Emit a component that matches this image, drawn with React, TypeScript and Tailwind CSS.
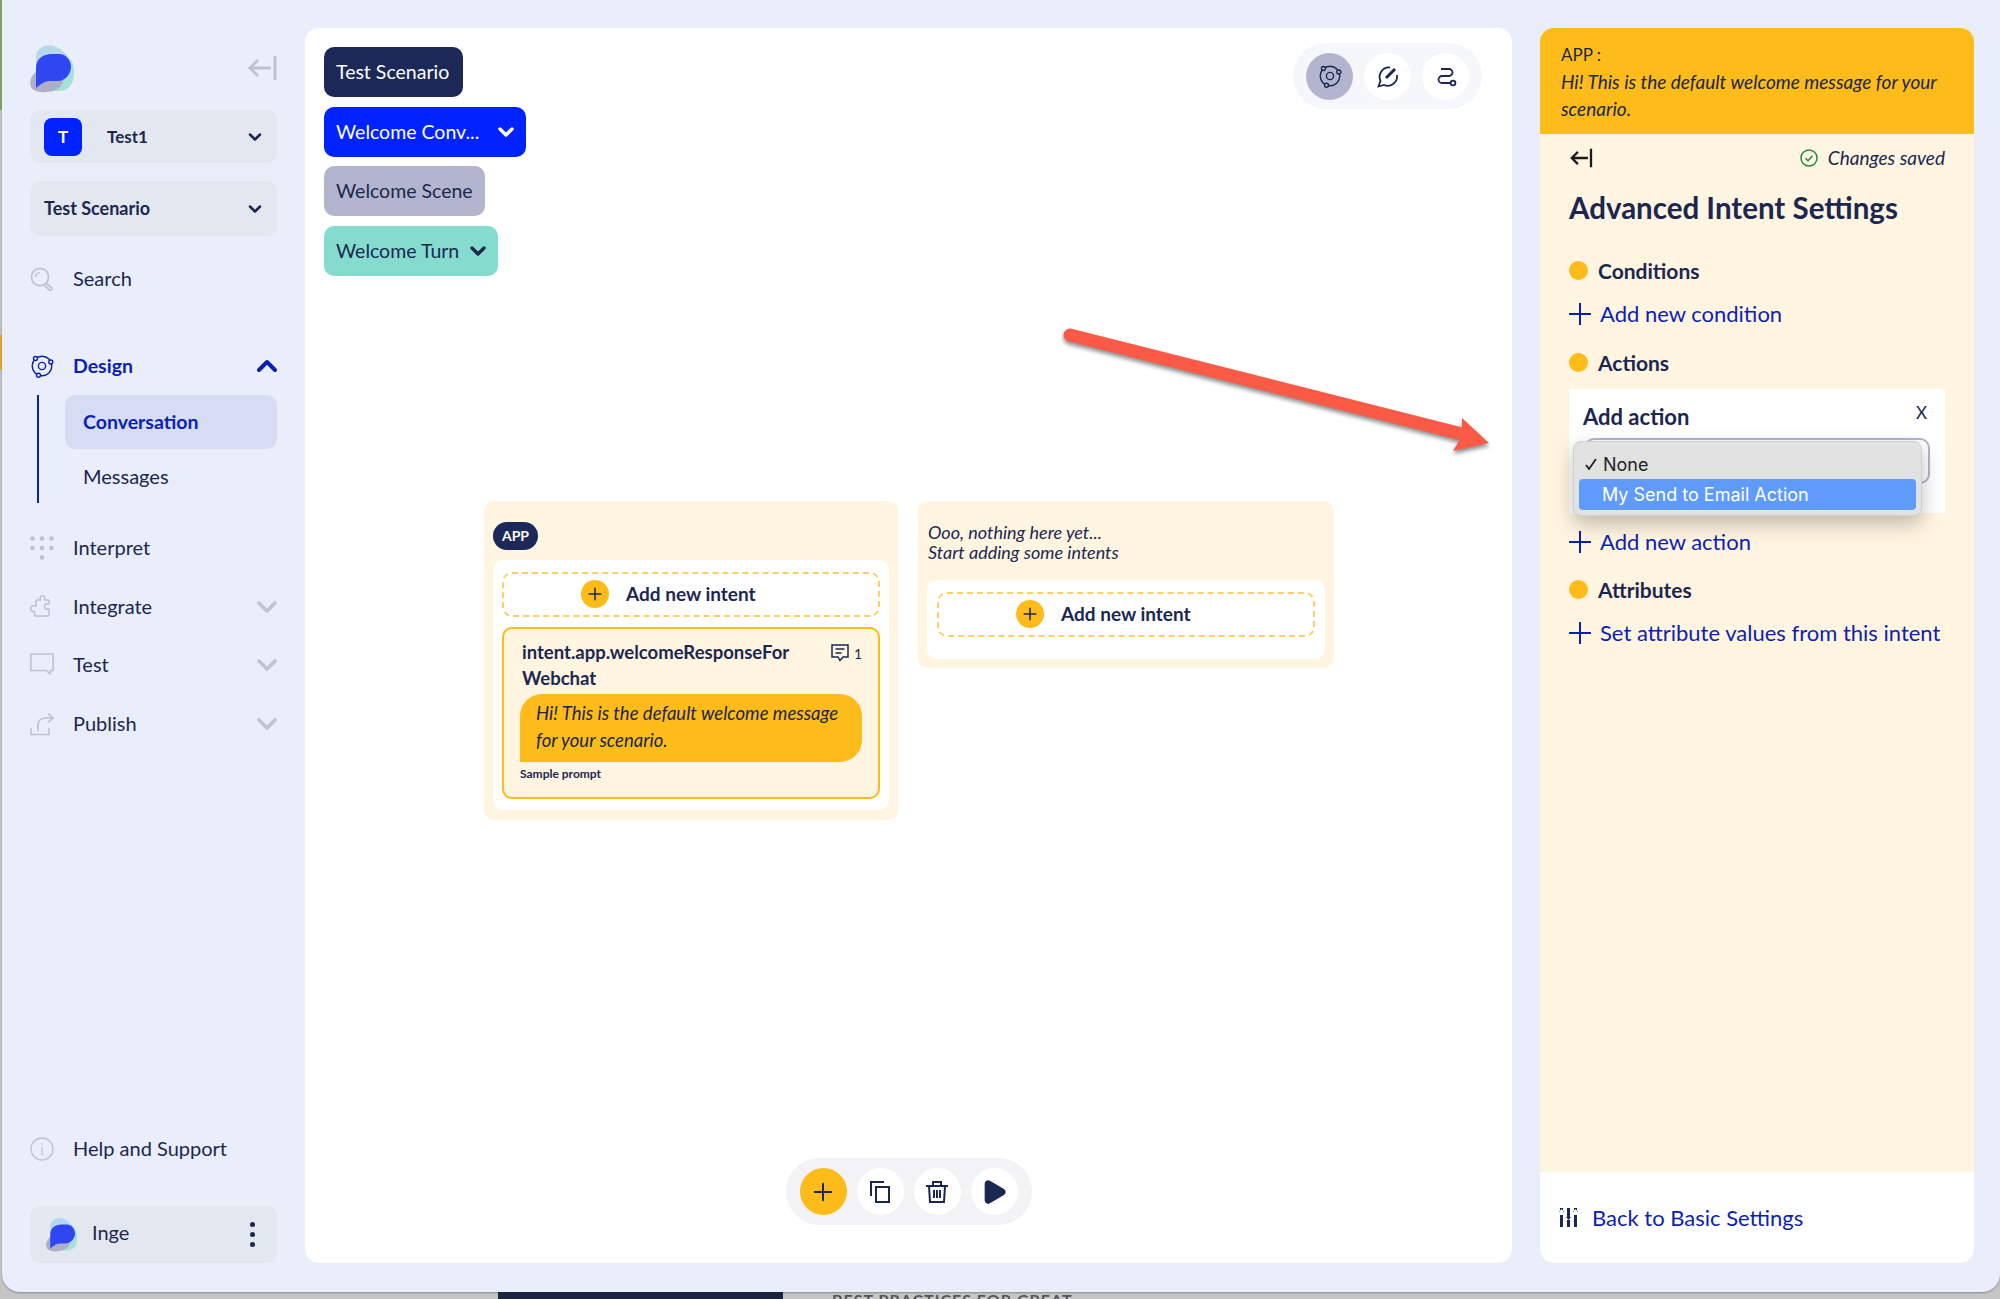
import React from 'react';
import { ChevronDown, ChevronUp, Plus, Play } from 'lucide-react';

const font = "font-['Lato','Liberation_Sans',sans-serif]";

function Logo({ size }: { size: number }) {
  return (
    <svg width={size} height={size} viewBox="0 0 48 48">
      <path d="M6 12C6 3 16 -2 24 1c8 3 12 8 14 11l-8 22L8 26C6 22 6 17 6 12z" fill="#b5d8f2" />
      <path d="M28 11c9-2 15 3 16 14 1 13-5 21-15 21-9 0-12-6-12-14z" fill="#a7e0d8" />
      <path d="M12 24C3 26 -2 36 1 42c3 6 14 6 22 4 7-2 12-8 10-16z" fill="#adafc9" />
      <path d="M6 43V23C6 14 13 9 22 9h7c7 0 12 6 12 13s-6 14-13 14H19C14 36 10 40 6 43z" fill="#2f46f0" />
    </svg>
  );
}

function AtomIcon({ className, bg }: { className?: string; bg: string }) {
  return (
    <svg className={className} viewBox="0 0 24 24" fill="none" stroke="currentColor" strokeWidth="1.4">
      <circle cx="12" cy="12" r="3.6" />
      <circle cx="12" cy="12" r="9.8" />
      <circle cx="5.500" cy="4.500" r="2" fill={bg} />
      <circle cx="20.800" cy="8" r="2" fill={bg} />
      <circle cx="8.500" cy="21.200" r="2" fill={bg} />
    </svg>
  );
}

function SearchIcon() {
  return (
    <svg className="h-6 w-6 text-[#bfc1cf]" viewBox="0 0 24 24" fill="none" stroke="currentColor">
      <circle cx="10" cy="10" r="8.6" strokeWidth="1.7" />
      <path d="M5.5 10a4.5 4.5 0 0 1 4.5-4.5" strokeWidth="1.4" />
      <path d="M16.5 16.5l5 4.2a1.6 1.6 0 0 1-2.3 2.2l-4.6-4.6" strokeWidth="1.7" />
    </svg>
  );
}

function DotsIcon() {
  return (
    <svg className="h-6 w-6 text-[#bfc1cf]" viewBox="0 0 24 24" fill="currentColor">
      <circle cx="2.5" cy="2.5" r="2.3" />
      <circle cx="12" cy="2.5" r="2.3" />
      <circle cx="21.5" cy="2.5" r="2.3" />
      <circle cx="2.5" cy="12" r="2.3" />
      <circle cx="12" cy="12" r="2.3" />
      <circle cx="21.5" cy="12" r="2.3" />
      <circle cx="12" cy="21.5" r="2.3" />
    </svg>
  );
}

function PuzzleIcon() {
  return (
    <svg className="h-6 w-6 text-[#bfc1cf]" viewBox="0 0 24 24" fill="none" stroke="currentColor" strokeWidth="1.5" strokeLinejoin="round">
      <path d="M7 5h3.500C9.500 2 11 .8 12.500.8S15.500 2 14.500 5H18a1 1 0 0 1 1 1v3c-3-1-4.500.5-4.500 2.500s1.500 3.500 4.500 2.500v6a1 1 0 0 1-1 1H5.500a1 1 0 0 1-1-1v-3.500C1 17 .8 14.500.8 13S3 10 6 11V6a1 1 0 0 1 1-1z" />
    </svg>
  );
}

function ChatIcon() {
  return (
    <svg className="h-6 w-6 text-[#bfc1cf]" viewBox="0 0 24 24" fill="none" stroke="currentColor" strokeWidth="1.6" strokeLinejoin="round">
      <path d="M.8 1h22.400v16.500h-3v3.500l-4-3.500H.8z" />
    </svg>
  );
}

function PublishIcon() {
  return (
    <svg className="h-6 w-6 text-[#bfc1cf]" viewBox="0 0 24 24" fill="none" stroke="currentColor" strokeWidth="1.6">
      <path d="M1 16v6.500h18V16M8 19v-6c0-5 4-7 8-7h6M18 1.500L23 6l-5 4.500" />
    </svg>
  );
}

function InfoIcon() {
  return (
    <svg className="h-6 w-6 text-[#bfc1cf]" viewBox="0 0 24 24" fill="none" stroke="currentColor" strokeWidth="1.3">
      <circle cx="12" cy="12" r="11" />
      <path d="M12 10.500v8M12 6v1.800" />
    </svg>
  );
}

function BackArrow({ className }: { className?: string }) {
  return (
    <svg className={className} viewBox="0 0 30 26" fill="none" stroke="currentColor" strokeWidth="3">
      <path d="M28 1v24M24 13H3M11 5l-8 8 8 8" />
    </svg>
  );
}

function NavRow({ icon, label, chevron, mt }: { icon: React.ReactNode; label: string; chevron?: boolean; mt: string }) {
  return (
    <div className={`flex h-10 items-center ${mt}`}>
      <div className="w-[43px]">{icon}</div>
      <span className="flex-1 pb-[2px] text-[20px] text-[#1b2750]">{label}</span>
      {chevron && <ChevronDown className="h-8 w-8 -mr-[6px] text-[#c0c2d4]" strokeWidth={2.8} />}
    </div>
  );
}

function Crumb({ label, className, chevron, width }: { label: string; className: string; chevron?: boolean; width: string }) {
  return (
    <div className={`flex h-[50px] items-center justify-between whitespace-nowrap rounded-[10px] pl-3 pr-2 text-[19.500px] ${width} ${className}`}>
      <span>{label}</span>
      {chevron && <ChevronDown className="h-6 w-6" strokeWidth={3.4} />}
    </div>
  );
}

function AddIntent() {
  return (
    <div className="flex h-[45px] items-center gap-[17px] rounded-[10px] border-2 border-dashed border-[#fdd063] pl-[77px]">
      <div className="flex h-7 w-7 items-center justify-center rounded-full bg-[#fdbc19]">
        <Plus className="h-5 w-5 text-[#1b2750]" strokeWidth={1.8} />
      </div>
      <span className="text-[19px] font-bold text-[#1b2750]">Add new intent</span>
    </div>
  );
}

function Heading({ label, mt }: { label: string; mt: string }) {
  return (
    <div className={`flex items-center gap-[10px] ${mt}`}>
      <div className="h-[19px] w-[19px] rounded-full bg-[#fdbc19]" />
      <span className="text-[21px] font-bold leading-7 text-[#1b2750]">{label}</span>
    </div>
  );
}

function AddLink({ label, mt }: { label: string; mt: string }) {
  return (
    <div className={`flex items-center gap-[9px] text-[#0c1fb3] ${mt}`}>
      <svg className="h-[22px] w-[22px]" viewBox="0 0 22 22" stroke="currentColor" strokeWidth="2">
        <path d="M11 0v22M0 11h22" />
      </svg>
      <span className="text-[22px] leading-7">{label}</span>
    </div>
  );
}

function RoundButton({ children, className = 'bg-white' }: { children: React.ReactNode; className?: string }) {
  return <div className={`flex h-[47px] w-[47px] items-center justify-center rounded-full ${className}`}>{children}</div>;
}

export default function App() {
  return (
    <div className={`relative h-[1299px] w-[2000px] overflow-hidden bg-[#c6c6c6] ${font}`}>
      {/* app window */}
      <div className="ml-[2px] flex h-[1292px] gap-7 rounded-b-[18px] bg-[#e9eefa] pl-[28px] pr-[26px] pt-7 shadow-[0_1px_2px_rgba(0,0,0,0.3)]">
        {/* sidebar */}
        <aside className="flex h-[1235px] w-[247px] flex-col">
          <div className="mb-[17px] mt-[17px] flex h-[48px] items-center justify-between">
            <Logo size={48} />
            <BackArrow className="-mt-[2px] h-[26px] w-[30px] text-[#c0c2d4]" />
          </div>
          <div className="flex h-[53px] items-center rounded-[10px] bg-[#e3e7f0] px-[14px]">
            <div className="flex h-[38px] w-[38px] items-center justify-center rounded-[8px] bg-[#0022ff] text-[17px] font-bold text-white">T</div>
            <span className="ml-[25px] flex-1 text-[17px] font-bold text-[#1b2750]">Test1</span>
            <ChevronDown className="h-5 w-5 -mr-[2px] text-[#1b2750]" strokeWidth={3} />
          </div>
          <div className="mt-[18px] flex h-[55px] items-center justify-between rounded-[10px] bg-[#e3e7f0] px-[14px]">
            <span className="text-[18px] font-bold text-[#1b2750]">Test Scenario</span>
            <ChevronDown className="h-5 w-5 -mr-[2px] text-[#1b2750]" strokeWidth={3} />
          </div>
          <NavRow mt="mt-[23px]" icon={<SearchIcon />} label="Search" />
          <div className="mt-[47px] flex h-10 items-center">
            <div className="w-[43px]"><AtomIcon bg="#e9eefa" className="h-6 w-6 text-[#0c1fb3]" /></div>
            <span className="flex-1 text-[19.500px] font-bold text-[#0c1fb3]">Design</span>
            <ChevronUp className="h-8 w-8 -mr-[6px] text-[#0c1fb3]" strokeWidth={3} />
          </div>
          <div className="ml-[7px] mt-[9px] border-l-2 border-[#0c1fb3] pl-[26px]">
            <div className="flex h-[54px] items-center rounded-[10px] bg-[#d5dcf3] pl-[18px] text-[19.500px] font-bold text-[#0c1fb3]">Conversation</div>
            <div className="flex h-[54px] items-center pl-[18px] text-[20px] text-[#1b2750]">Messages</div>
          </div>
          <NavRow mt="mt-[25px]" icon={<DotsIcon />} label="Interpret" />
          <NavRow mt="mt-[19px]" icon={<PuzzleIcon />} label="Integrate" chevron />
          <NavRow mt="mt-[18px]" icon={<ChatIcon />} label="Test" chevron />
          <NavRow mt="mt-[19px]" icon={<PublishIcon />} label="Publish" chevron />
          <NavRow mt="mt-auto" icon={<InfoIcon />} label="Help and Support" />
          <div className="mt-[37px] flex h-[57px] items-center rounded-[10px] bg-[#e3e7f0] pl-4 pr-[22px]">
            <Logo size={34} />
            <span className="ml-3 flex-1 pb-[5px] text-[20px] text-[#1b2750]">Inge</span>
            <div className="flex flex-col gap-[5px]">
              <div className="h-[5px] w-[5px] rounded-full bg-[#1b2750]" />
              <div className="h-[5px] w-[5px] rounded-full bg-[#1b2750]" />
              <div className="h-[5px] w-[5px] rounded-full bg-[#1b2750]" />
            </div>
          </div>
        </aside>

        {/* canvas */}
        <main className="relative flex h-[1235px] w-[1207px] flex-col rounded-[14px] bg-white">
          <div className="flex items-start justify-between pl-[19px] pr-[30px] pt-[19px]">
            <div className="flex flex-col gap-[9.5px]">
              <Crumb label="Test Scenario" width="w-[139px]" className="bg-[#1c2857] text-white" />
              <Crumb label="Welcome Conv..." width="w-[202px]" className="bg-[#0022ff] text-white" chevron />
              <Crumb label="Welcome Scene" width="w-[161px]" className="bg-[#b3b5cf] text-[#1b2750]" />
              <Crumb label="Welcome Turn" width="w-[174px]" className="bg-[#84dccf] text-[#1b2750]" chevron />
            </div>
            <div className="-mt-[4px] flex h-[66px] items-center gap-[11px] rounded-full bg-[#f6f7fb] px-[13px]">
              <RoundButton className="bg-[#b3b5cf]"><AtomIcon bg="#b3b5cf" className="h-6 w-6 text-[#1b2750]" /></RoundButton>
              <RoundButton>
                <svg className="h-6 w-6 text-[#1b2750]" viewBox="0 0 24 24" fill="none" stroke="currentColor" strokeWidth="1.8">
                  <path d="M14 3.500A9.500 9.500 0 0 0 4.500 17L2.500 22.500 8 21A9.500 9.500 0 0 0 21 11" />
                  <path d="M10 14l9-9" strokeWidth="3" />
                </svg>
              </RoundButton>
              <RoundButton>
                <svg className="h-6 w-6 text-[#1b2750]" viewBox="0 0 24 24" fill="none" stroke="currentColor" strokeWidth="1.8">
                  <path d="M7 5H15a3.500 3.500 0 0 1 0 7H8a3.500 3.500 0 0 0 0 7h8.500" />
                  <circle cx="19" cy="19" r="2.400" />
                </svg>
              </RoundButton>
            </div>
          </div>

          <div className="ml-[179px] mt-[225px] flex items-start gap-5">
            <div className="h-[319px] w-[414px] rounded-[10px] bg-[#fff5e1] p-[9px] pt-[21px]">
              <div className="flex h-7 w-[45px] items-center justify-center rounded-full bg-[#1c2857] text-[14px] font-bold text-white">APP</div>
              <div className="mt-[10px] h-[250px] rounded-[10px] bg-white p-[9px] pt-3">
                <AddIntent />
                <div className="mt-[10px] h-[172px] rounded-[10px] border-2 border-[#fdbc19] bg-[#fff5e1] pl-4 pr-4 pt-[10px]">
                  <div className="flex items-start justify-between pl-[2px]">
                    <div className="w-[280px] text-[18.500px] font-bold leading-[26px] text-[#1b2750]">intent.app.welcomeResponseFor Webchat</div>
                    <div className="mt-[4px] flex items-center gap-[5px] text-[14px] text-[#1b2750]">
                      <svg className="h-[18px] w-[18px]" viewBox="0 0 18 18" fill="none" stroke="currentColor" strokeWidth="1.500">
                        <path d="M1 1h16v12h-5l-3 3.500L7 13H1z" />
                        <path d="M4.500 5h9M4.500 9h6" />
                      </svg>
                      <span>1</span>
                    </div>
                  </div>
                  <div className="mt-[3px] h-[68px] rounded-[22px] rounded-bl-none bg-[#fdbc19] pl-4 pr-2 pt-[6px] text-[18.500px] italic leading-[27px] text-[#1b2750]">
                    Hi! This is the default welcome message for your scenario.
                  </div>
                  <div className="mt-[5px] text-[12px] font-bold leading-[14px] text-[#1b2750]">Sample prompt</div>
                </div>
              </div>
            </div>
            <div className="h-[167px] w-[416px] rounded-[10px] bg-[#fff5e1] px-[9px] pt-[21px]">
              <div className="pl-[1px] text-[18px] italic leading-5 text-[#1b2750]">
                <div>Ooo, nothing here yet...</div>
                <div>Start adding some intents</div>
              </div>
              <div className="mt-[18px] h-[79px] rounded-[10px] bg-white px-[10px] pt-3">
                <AddIntent />
              </div>
            </div>
          </div>

          <div className="mb-[38px] mt-auto flex h-[67px] items-center gap-[10px] self-center rounded-full bg-[#f3f3f5] px-[14px]">
            <RoundButton className="bg-[#fdbc19]"><Plus className="h-7 w-7 text-[#1b2750]" strokeWidth={1.7} /></RoundButton>
            <RoundButton>
              <svg className="h-6 w-6 text-[#1b2750]" viewBox="0 0 24 24" fill="none" stroke="currentColor" strokeWidth="2">
                <path d="M3 16V2h13" />
                <rect x="8" y="7" width="13" height="15" />
              </svg>
            </RoundButton>
            <RoundButton>
              <svg className="h-6 w-6 text-[#1b2750]" viewBox="0 0 24 24" fill="none" stroke="currentColor" strokeWidth="2">
                <path d="M1 6h22M8 6V2h8v4M4 6l1 16h14l1-16M9 10v8M12 10v8M15 10v8" />
              </svg>
            </RoundButton>
            <RoundButton>
              <Play className="h-7 w-7 text-[#1b2750]" fill="currentColor" />
            </RoundButton>
          </div>
        </main>

        {/* settings panel */}
        <section className="flex h-[1235px] w-[434px] flex-col overflow-hidden rounded-[14px]">
          <div className="h-[106px] bg-[#fdbc19] pl-[21px] pr-4 pt-[13px] text-[17px] leading-[27px] text-[#1b2750]">
            <div>APP :</div>
            <div className="text-[19px] italic">Hi! This is the default welcome message for your scenario.</div>
          </div>
          <div className="relative flex-1 bg-[#fff5e1] pl-[29px] pr-[29px] pt-[10px]">
            <div className="flex items-center justify-between">
              <BackArrow className="h-5 w-6 text-[#1b1b1b]" />
              <div className="flex items-center gap-[10px] text-[19px] italic text-[#1b2750]">
                <svg className="h-[18px] w-[18px] text-[#1f8a3b]" viewBox="0 0 18 18" fill="none" stroke="currentColor" strokeWidth="1.500">
                  <circle cx="9" cy="9" r="8" />
                  <path d="M5.500 9.200l2.500 2.500 4.500-5" />
                </svg>
                <span>Changes saved</span>
              </div>
            </div>
            <h1 className="mt-[17px] text-[29.500px] font-bold leading-9 text-[#1b2750]">Advanced Intent Settings</h1>
            <Heading label="Conditions" mt="mt-[31px]" />
            <AddLink label="Add new condition" mt="mt-[15px]" />
            <Heading label="Actions" mt="mt-[21px]" />
            <div className="relative mt-[12px] h-[124px] bg-white">
              <div className="absolute left-[14px] top-[14px] text-[22px] font-bold leading-7 text-[#1b2750]">Add action</div>
              <div className="absolute right-[18px] top-[11px] text-[17px] text-[#1b2750]">X</div>
              <div className="absolute left-[15px] top-[49px] h-[46px] w-[346px] rounded-[10px] border-2 border-[#b3b5cf]" />
              <div className="absolute left-[4px] top-[52px] h-[75px] w-[349px] rounded-[8px] border border-[#cfcfcf] bg-[#e2e2e2] shadow-[0_8px_20px_rgba(0,0,0,0.25)]">
                <div className="flex h-[37px] items-center pt-2 font-['Inter',sans-serif] text-[18px] text-[#222]">
                  <svg className="ml-[11px] h-3 w-3" viewBox="0 0 12 12" fill="none" stroke="currentColor" strokeWidth="1.800"><path d="M1 7l3 4 7-10" /></svg>
                  <span className="ml-[6px]">None</span>
                </div>
                <div className="mx-[5px] flex h-[31px] items-center rounded-[4px] bg-[#5f9bfb] pl-[23px] font-['Inter',sans-serif] text-[18px] text-white">My Send to Email Action</div>
              </div>
            </div>
            <AddLink label="Add new action" mt="mt-[15px]" />
            <Heading label="Attributes" mt="mt-[20px]" />
            <AddLink label="Set attribute values from this intent" mt="mt-[15px]" />
          </div>
          <div className="flex h-[91px] items-center gap-[14px] bg-white pb-[1px] pl-[19px] text-[#0c1fb3]">
            <svg className="h-[20px] w-[19px] text-[#1b2750]" viewBox="0 0 19 20" fill="currentColor">
              <path d="M1 8h3v12H1zM8 13h3v7H8zM15 8h3v12h-3zM8 1h3v9H8zM1 1h3v4H1zM15 1h3v4h-3zM0 5h5L2.500 2zM14 5h5l-2.500-3zM7 10h5l-2.500 3z" />
            </svg>
            <span className="text-[22px]">Back to Basic Settings</span>
          </div>
        </section>
      </div>

      {/* what shows behind the window */}
      <div className="flex h-[7px] overflow-hidden">
        <div className="ml-[498px] h-full w-[285px] bg-[#1c2340]" />
        <div className="ml-[49px] whitespace-nowrap text-[16px] font-bold leading-[16px] tracking-[1px] text-[#555]">BEST PRACTICES FOR GREAT</div>
      </div>
      <div className="absolute left-0 top-0 h-[110px] w-[2px] bg-[#7aa36a]" />
      <div className="absolute left-0 top-[335px] h-[35px] w-[2px] bg-[#e0a030]" />

      {/* annotation arrow */}
      <svg className="absolute left-[1060px] top-[325px] h-[140px] w-[440px] drop-shadow-[0_3px_2px_rgba(0,0,0,0.45)]" viewBox="0 0 440 140" fill="none">
        <g transform="translate(-1060 -325)">
          <path d="M1070 335 L1470 436" stroke="#fb5a47" strokeWidth="13" strokeLinecap="round" />
          <path d="M1462 418 L1489 443 L1453 451 L1462 436z" fill="#fb5a47" />
        </g>
      </svg>
    </div>
  );
}
